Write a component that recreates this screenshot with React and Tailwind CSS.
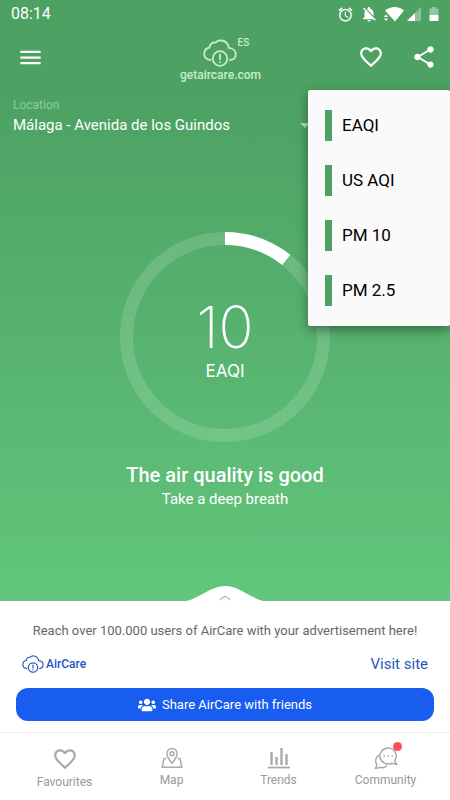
import { useState } from "react";
import { MdMenu, MdFavoriteBorder, MdShare, MdAlarm, MdNotificationsOff, MdArrowDropDown } from "react-icons/md";
import { FaUsers } from "react-icons/fa";

const SCALES = ["EAQI", "US AQI", "PM 10", "PM 2.5"];

const CloudLogo = ({ className }) => (
  <svg viewBox="0 0 34 28" fill="none" stroke="currentColor" strokeWidth="1.8" strokeLinecap="round" className={className}>
    <path d="M7.5 21C3.5 20.5 1.2 18 1.2 15c0-3.200 2-5.800 5.300-6.500C6.800 5 9.500 3 12.500 3.600 14 2 16 1.200 18.500 1.500c4 .5 6.800 3.300 7.300 7.300 4 .3 6.900 2.900 6.900 6.400 0 3.100-2.200 5.500-5.700 5.800" />
    <circle cx="17" cy="19.500" r="7.300" />
    <path d="M17 15.500v4.700M17 23v.2" />
  </svg>
);

const MapIcon = () => (
  <svg viewBox="0 0 24 24" fill="none" stroke="currentColor" strokeWidth="1.500" className="h-6 w-6">
    <path d="M12 17.200C9 13.500 6.800 10.800 6.800 7.700a5.200 5.200 0 0 1 10.400 0c0 3.100-2.200 5.800-5.200 9.500z" />
    <circle cx="12" cy="7.700" r="2" />
    <path d="M6.300 12.500H4L2.200 21.300h19.600L20 12.500h-2.300" />
  </svg>
);

const TrendsIcon = () => (
  <svg viewBox="0 0 24 24" fill="none" stroke="currentColor" strokeWidth="2.400" className="h-6 w-6">
    <path d="M4.500 6v13M9.500 11v8M14.500 2v17M19.500 8v11" />
    <path d="M1 21.500h22" strokeWidth="1.800" />
  </svg>
);

const CommunityIcon = () => (
  <svg viewBox="0 0 24 24" fill="none" stroke="currentColor" strokeWidth="1.500" strokeLinejoin="round" className="h-6 w-6">
    <path d="M14.500 2A8.500 8 0 1 0 18 17.200c1.600.8 3.200 1.200 5 1.200-1.200-1-1.900-2.300-2.200-3.900A8 8 0 0 0 14.500 2z" />
    <path d="M5 9.200c-3.300 2-4.300 6-2.300 9.300.2 1.500-.4 2.800-1.500 3.800 1.800.1 3.300-.2 4.800-1 2.500.9 5.200.3 7-1.700" />
    <path d="M9.500 10h1.500M13.500 10H15M17.500 10H19" strokeWidth="1.700" />
  </svg>
);

const TABS = [
  { label: "Favourites", icon: <MdFavoriteBorder className="h-[26px] w-[26px]" /> },
  { label: "Map", icon: <MapIcon /> },
  { label: "Trends", icon: <TrendsIcon /> },
  { label: "Community", icon: <CommunityIcon />, unread: true },
];

const StatusBar = () => (
  <div className="flex h-7 items-center justify-between pl-[11px] pr-2">
    <span className="text-base">08:14</span>
    <div className="flex items-center">
      <MdAlarm className="h-[17px] w-[17px]" />
      <MdNotificationsOff className="ml-[6px] h-[18px] w-[18px]" />
      {/* wifi with traffic arrows */}
      <svg viewBox="0 0 20 16" fill="currentColor" className="ml-[6px] h-4 w-5">
        <path d="M11 15.500L1 4.500C6.500-.2 15-.2 20 4.500z" />
        <path d="M0 11l2-2.500L4 11zM0 12.500h4L2 15z" />
      </svg>
      <svg viewBox="0 0 16 16" fill="currentColor" className="ml-[2px] h-4 w-4">
        <path d="M15 1v14H1z" opacity=".35" />
        <path d="M9 7v8H1z" />
      </svg>
      <svg viewBox="0 0 16 16" fill="currentColor" className="ml-1 h-4 w-4">
        <path d="M6 1h4v1.500h2.500V9h-9V2.500H6z" opacity=".4" />
        <path d="M3.500 9h9v6h-9z" />
      </svg>
    </div>
  </div>
);

// progress is the filled part of the ring, 0 to 1
const Gauge = ({ value, unit, progress }) => (
  <div className="mx-auto mt-[95px] grid w-[210px] place-items-center">
    <svg viewBox="0 0 210 210" fill="none" stroke="white" strokeWidth="13" className="col-start-1 row-start-1 w-full">
      <circle cx="105" cy="105" r="98.500" opacity=".15" />
      <circle
        cx="105"
        cy="105"
        r="98.500"
        pathLength="100"
        strokeDasharray={`${progress * 100} 100`}
        transform="rotate(-90 105 105)"
      />
    </svg>
    <div className="col-start-1 row-start-1 flex flex-col items-center">
      <span className="font-[Inter,sans-serif] text-[58px] font-extralight leading-[68px]">{value}</span>
      <span className="font-[Inter,sans-serif] text-[17px] leading-5">{unit}</span>
    </div>
  </div>
);

export default function App() {
  const [scale, setScale] = useState("EAQI");

  return (
    <div className="relative flex min-h-screen flex-col bg-white font-[Roboto,sans-serif]">
      <main className="flex flex-1 flex-col bg-linear-to-b from-[#4da163] from-15% to-[#62c67c] text-white">
        <StatusBar />

        <header className="grid h-[58px] grid-cols-[1fr_auto_1fr] items-center pl-1 pr-[13px]">
          <button type="button" aria-label="Menu" className="justify-self-start pl-[13px]">
            <MdMenu className="h-[27px] w-[27px]" />
          </button>
          <a href="#home" className="flex flex-col items-center pt-2 text-[#c5ecc9]">
            <span className="relative">
              <CloudLogo className="h-7 w-[34px]" />
              <span className="absolute -top-1 left-full text-[10px] font-medium">ES</span>
            </span>
            <span className="text-xs font-medium">getaircare.com</span>
          </a>
          <div className="flex items-center gap-[27px] justify-self-end">
            <button type="button" aria-label="Add to favourites">
              <MdFavoriteBorder className="h-[26px] w-[26px]" />
            </button>
            <button type="button" aria-label="Share">
              <MdShare className="h-[26px] w-[26px]" />
            </button>
          </div>
        </header>

        <div className="px-[13px] pt-3">
          <p className="text-xs leading-[15px] text-[#8fcb9b]">Location</p>
          <button type="button" className="flex w-[304px] items-center justify-between text-[15px] leading-5">
            Málaga - Avenida de los Guindos
            <MdArrowDropDown className="h-6 w-6 text-[#b5dcbd]" />
          </button>
        </div>

        <Gauge value={10} unit={scale} progress={0.107} />

        <div className="mt-[19px] text-center">
          <h1 className="text-xl font-medium leading-7">The air quality is good</h1>
          <p className="text-[15px] leading-5">Take a deep breath</p>
        </div>

        <button type="button" aria-label="Show more" className="mx-auto mt-auto">
          <svg viewBox="0 0 76 16" fill="none" className="block h-4 w-[76px]">
            <path d="M0 16C16 11 24 1 38 1s22 10 38 15z" fill="white" />
            <path d="M32.500 15l5.500-4 5.500 4" stroke="#999" />
          </svg>
        </button>
      </main>

      <section className="px-4 pb-[11px] pt-5">
        <p className="text-center text-[13px] leading-5 text-[#666]">
          Reach over 100.000 users of AirCare with your advertisement here!
        </p>
        <div className="flex items-center justify-between px-[6px] pb-[14px] pt-[13px] text-[#2457be]">
          <a href="#aircare" className="flex items-center gap-[2px] text-xs font-medium">
            <CloudLogo className="h-[18px] w-[22px]" />
            AirCare
          </a>
          <a href="#visit" className="text-[15px] leading-5">Visit site</a>
        </div>
        <button
          type="button"
          className="flex h-[33px] w-full items-center justify-center gap-[6px] rounded-xl bg-[#195cf0] text-[13px] text-white"
        >
          <FaUsers className="h-[18px] w-[18px]" />
          Share AirCare with friends
        </button>
      </section>

      <nav className="grid h-[68px] grid-cols-4 items-start border-t border-[#ebebf0] px-[11px] pt-[13px] text-[#999]">
        {TABS.map((tab) => (
          <a key={tab.label} href={`#${tab.label.toLowerCase()}`} className="flex flex-col items-center text-xs leading-5">
            <span className="relative text-[#aaa]">
              {tab.icon}
              {tab.unread && <span className="absolute -right-1 -top-1 h-[9px] w-[9px] rounded-full bg-[#fa5252]" />}
            </span>
            {tab.label}
          </a>
        ))}
      </nav>

      {/* Scale menu, opened from the header */}
      <div role="menu" className="absolute right-0 top-[90px] w-[142px] rounded-[2px] bg-[#fafafa] py-2 shadow-[0_4px_12px_rgba(0,0,0,0.4)]">
        {SCALES.map((name) => (
          <button
            key={name}
            type="button"
            role="menuitem"
            onClick={() => setScale(name)}
            className="flex h-[55px] w-full items-center gap-[10px] pl-[17px] text-[17px] text-black"
          >
            <span className="h-[31px] w-[7px] bg-[#4da163]" />
            {name}
          </button>
        ))}
      </div>
    </div>
  );
}
